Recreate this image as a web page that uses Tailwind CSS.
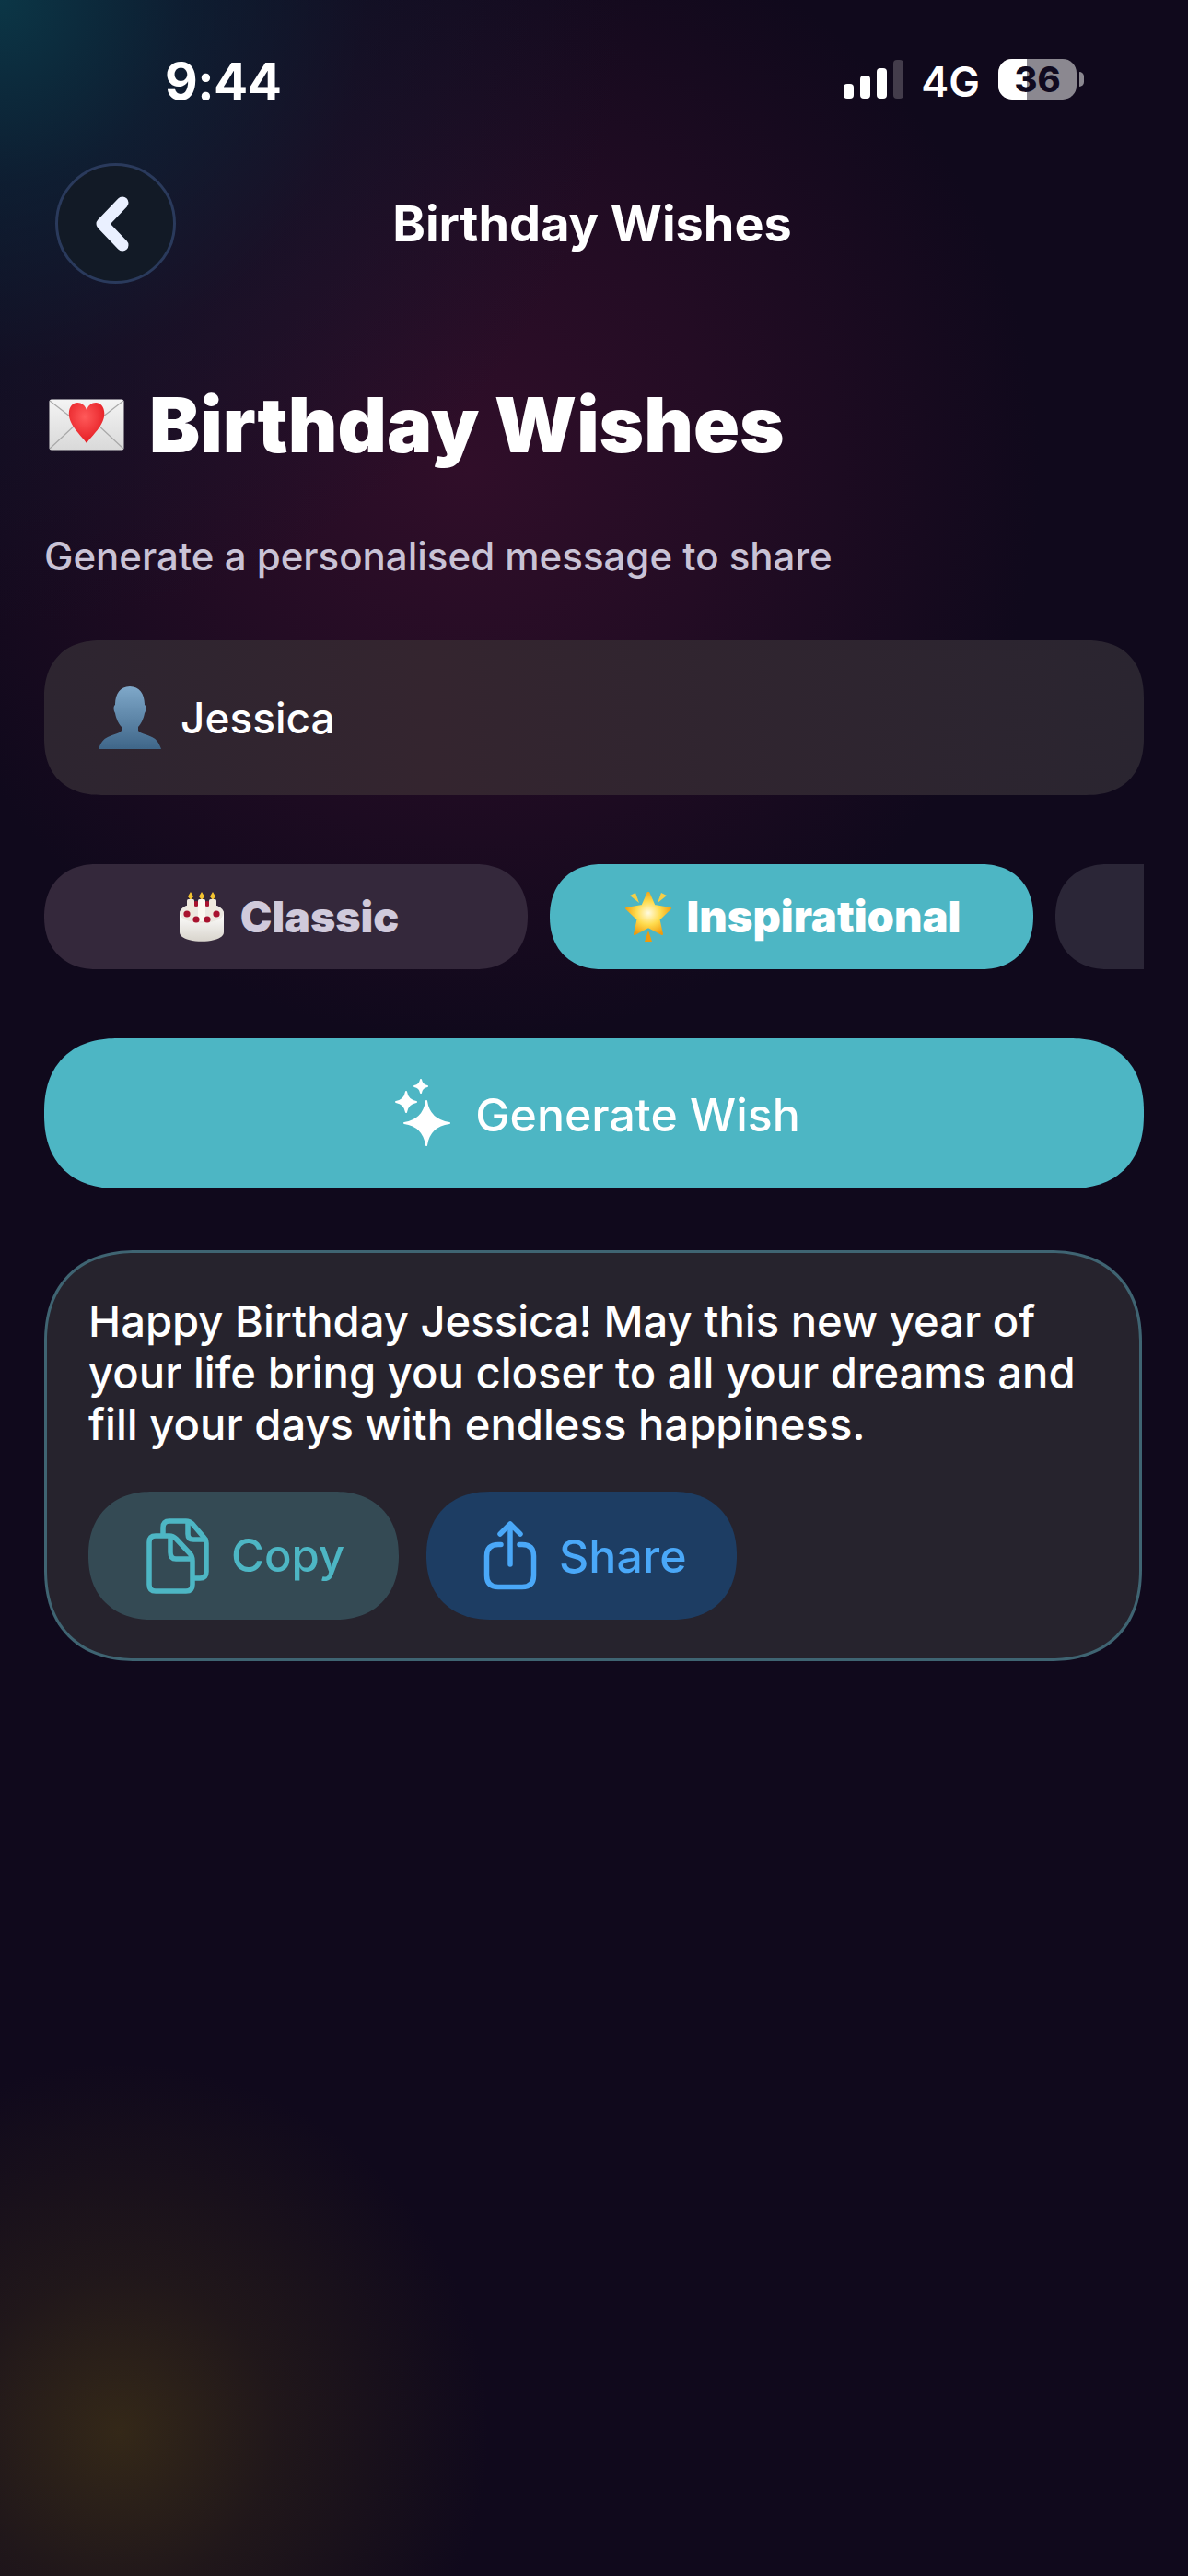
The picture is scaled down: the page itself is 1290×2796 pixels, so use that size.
<!DOCTYPE html>
<html lang="en">
<head>
    <meta charset="UTF-8">
    <meta name="viewport" content="width=device-width, initial-scale=1.0">
    <title>Birthday Wishes</title>
    <script src="https://cdn.jsdelivr.net/npm/@tailwindcss/browser@4"></script>
</head>
<body class="w-[1290px] h-[2796px] overflow-hidden text-white font-['Inter',sans-serif] bg-[#10091c] bg-[radial-gradient(circle_at_0px_0px,rgba(11,54,70,1)_0px,rgba(12,40,60,0.65)_200px,rgba(14,27,48,0.35)_400px,rgba(15,20,40,0)_680px),radial-gradient(circle_at_510px_510px,#300e29_0px,rgba(48,14,41,0.6)_280px,rgba(48,14,41,0)_620px),radial-gradient(circle_at_130px_2640px,rgba(52,40,24,1)_0px,rgba(52,40,24,0.45)_170px,rgba(52,40,24,0)_400px)]">

    <!-- Status bar -->
    <div class="h-[177px] flex justify-between items-start pt-[58px] pl-[179px] pr-[113px]">
        <span class="text-[55px] leading-[60px] font-bold tracking-[-0.5px]">9:44</span>
        <div class="flex items-center h-[44px] mt-[6px]">
            <svg class="w-[65px] h-[42px]" viewBox="0 0 65 42" fill="#fff">
                <rect x="0" y="26" width="11" height="16" rx="4"/>
                <rect x="18" y="17" width="11" height="25" rx="4"/>
                <rect x="36" y="9" width="11" height="33" rx="4"/>
                <rect x="54" y="0" width="11" height="42" rx="4" fill="#433c4b"/>
            </svg>
            <span class="ml-[19px] pt-[5px] text-[45px] leading-[44px] font-semibold">4G</span>
            <!-- Battery -->
            <div class="relative ml-[20px] w-[85px] h-[44px] rounded-[15px] overflow-hidden bg-[#8b8890] flex items-center justify-center">
                <div class="absolute left-0 top-0 bottom-0 w-[31px] bg-white"></div>
                <span class="relative text-[38px] leading-[44px] font-extrabold text-[#100a1f]">36</span>
            </div>
            <div class="ml-[3px] w-[5px] h-[16px] rounded-r-full bg-[#8b8890]"></div>
        </div>
    </div>

    <!-- Nav -->
    <div class="relative h-[131px] flex items-center justify-center mr-[4px]">
        <button class="absolute left-[60px] top-0 w-[131px] h-[131px] rounded-full bg-[#121a26] border-[3px] border-[#2a3a5c] flex items-center justify-center">
            <svg class="w-[48px] h-[72px]" viewBox="0 0 48 72" fill="none" stroke="#eaf0ff" stroke-width="13" stroke-linecap="round" stroke-linejoin="round">
                <path d="M31 13 L9 36 L31 59"/>
            </svg>
        </button>
        <h2 class="text-[54px] leading-[60px] font-bold">Birthday Wishes</h2>
    </div>

    <div class="px-[48px]">
        <!-- Heading -->
        <div class="flex items-center mt-[105px] h-[96px]">
            <svg class="ml-[5px] w-[82px] h-[56px]" viewBox="0 0 82 56">
                <defs>
                    <linearGradient id="env" x1="0" y1="0" x2="0" y2="1">
                        <stop offset="0" stop-color="#f4f4f4"/>
                        <stop offset="1" stop-color="#d9d9d9"/>
                    </linearGradient>
                    <radialGradient id="heart" cx="0.45" cy="0.35" r="0.7">
                        <stop offset="0" stop-color="#ff5a5a"/>
                        <stop offset="1" stop-color="#e3181f"/>
                    </radialGradient>
                </defs>
                <rect x="0.5" y="0.5" width="81" height="55" rx="2.5" fill="url(#env)"/>
                <path d="M1 2 L41 33 L81 2 M1 54 L30 27 M81 54 L52 27" fill="none" stroke="#a9a9a9" stroke-width="1.2"/>
                <path d="M41 47 C34 39 16 28 16 15 C16 7 22 3 28 3 C34 3 39 6 41 11 C43 6 48 3 54 3 C60 3 66 7 66 15 C66 28 48 39 41 47 Z" fill="url(#heart)" transform="translate(9.5 1) scale(0.77 1)"/>
            </svg>
            <h1 class="ml-[27px] text-[82.7px] leading-[96px] font-black">Birthday Wishes</h1>
        </div>

        <p class="mt-[70px] text-[42px] leading-[50px] font-medium text-[#c9c3d6]">Generate a personalised message to share</p>

        <!-- Name input -->
        <div class="mt-[66px] h-[168px] rounded-[62px] [corner-shape:superellipse(1.2)] bg-[linear-gradient(90deg,#2d2530,#34252f_35%,#2a2530)] flex items-center pl-[59px]">
            <svg class="w-[68px] h-[68px]" viewBox="0 0 68 68">
                <defs>
                    <linearGradient id="person" x1="0" y1="0" x2="0" y2="1">
                        <stop offset="0" stop-color="#7fa8c9"/>
                        <stop offset="1" stop-color="#3f6689"/>
                    </linearGradient>
                </defs>
                <path d="M34 0 C45 0 50 9 50 20 C52 21 52 26 50 29 C49 35 46 41 43 44 L43 48 C45 51 52 52 58 55 C63 57 66 62 68 68 L0 68 C2 62 5 57 10 55 C16 52 23 51 25 48 L25 44 C22 41 19 35 18 29 C16 26 16 21 18 20 C18 9 23 0 34 0 Z" fill="url(#person)"/>
            </svg>
            <span class="ml-[21px] text-[46px] leading-[56px] font-medium">Jessica</span>
        </div>

        <!-- Tone pills -->
        <div class="mt-[75px] flex gap-[24px] overflow-hidden h-[114px]">
            <div class="shrink-0 w-[525px] h-[114px] rounded-[57px] [corner-shape:superellipse(1.15)] bg-[#34283b] flex items-center justify-center pl-[6px]">
                <svg class="w-[50px] h-[54px]" viewBox="0 0 50 54">
                    <defs>
                        <linearGradient id="cake" x1="0" y1="0" x2="0" y2="1">
                            <stop offset="0" stop-color="#ffffff"/>
                            <stop offset="1" stop-color="#d8d4cc"/>
                        </linearGradient>
                    </defs>
                    <path d="M13 0 L16 5 L13 9 L10 5 Z M25 0 L28 5 L25 9 L22 5 Z M37 0 L40 5 L37 9 L34 5 Z" fill="#f4c430"/>
                    <ellipse cx="25" cy="24" rx="24" ry="12" fill="#f2efe9"/>
                    <path d="M1 24 C1 22 49 22 49 24 V44 C49 57 1 57 1 44 Z" fill="url(#cake)"/>
                    <ellipse cx="25" cy="23" rx="24" ry="11" fill="#ece8e1"/>
                    <circle cx="19" cy="13" r="3" fill="#a8122e"/><circle cx="31" cy="13" r="3" fill="#a8122e"/>
                    <rect x="9" y="8" width="8" height="20" rx="1.5" fill="#efe9dd"/>
                    <rect x="21" y="8" width="8" height="24" rx="1.5" fill="#fbf8f0"/>
                    <rect x="33" y="8" width="8" height="20" rx="1.5" fill="#efe9dd"/>
                    <circle cx="9" cy="24" r="3.6" fill="#a8122e"/><circle cx="19" cy="30" r="3.6" fill="#a8122e"/>
                    <circle cx="31" cy="30" r="3.6" fill="#a8122e"/><circle cx="41" cy="24" r="3.6" fill="#a8122e"/>
                </svg>
                <span class="ml-[17px] text-[46.4px] leading-[56px] font-black text-[#d0cadb]">Classic</span>
            </div>
            <div class="shrink-0 w-[525px] h-[114px] rounded-[57px] [corner-shape:superellipse(1.15)] bg-[#4db6c4] flex items-center justify-center">
                <svg class="w-[52px] h-[54px] translate-x-[2px]" viewBox="0 0 52 54">
                    <defs>
                        <radialGradient id="star" cx="0.5" cy="0.5" r="0.55">
                            <stop offset="0" stop-color="#fffbe0"/>
                            <stop offset="0.5" stop-color="#ffdc4e"/>
                            <stop offset="1" stop-color="#f09a0c"/>
                        </radialGradient>
                    </defs>
                    <path d="M26 0 L32.5 15 L50 18 L37.5 30 L41 46 L26 38 L11 46 L14.5 30 L2 18 L19.5 15 Z" fill="url(#star)" stroke="url(#star)" stroke-width="2" stroke-linejoin="round"/>
                    <path d="M6 4 L12 1 L16 12 Z M46 4 L40 1 L36 12 Z" fill="#f7cf45"/>
                    <path d="M26 42 L30 54 L22 54 Z" fill="#f09a0c"/>
                </svg>
                <span class="ml-[18px] text-[47px] leading-[56px] font-black">Inspirational</span>
            </div>
            <div class="shrink-0 w-[525px] h-[114px] rounded-[57px] [corner-shape:superellipse(1.15)] bg-[#2b2637]"></div>
        </div>

        <!-- Generate button -->
        <button class="mt-[75px] w-full h-[163px] rounded-[80px] [corner-shape:superellipse(1.2)] bg-[#4db6c4] flex items-center justify-center pl-[6px]">
            <svg class="w-[64px] h-[77px]" viewBox="0 0 64 77" fill="#fff" stroke="#fff" stroke-width="2" stroke-linejoin="round">
                <path d="M36 25 Q39 46 61 49 Q39 52 36 73 Q33 52 12 49 Q33 46 36 25 Z"/>
                <path d="M14 15 Q15.5 24.5 25 26 Q15.5 27.5 14 37 Q12.5 27.5 3 26 Q12.5 24.5 14 15 Z"/>
                <path d="M30 2 Q31 8 37 9 Q31 10 30 16 Q29 10 23 9 Q29 8 30 2 Z"/>
            </svg>
            <span class="ml-[25px] pt-[2px] text-[50px] leading-[60px] font-medium">Generate Wish</span>
        </button>

        <!-- Result card -->
        <div class="mt-[67px] w-[1192px] h-[446px] rounded-[100px] [corner-shape:superellipse(1.2)] border-[3px] border-[#3f6472] bg-[#26232d] pl-[45px] pt-[46px]">
            <p class="text-[47.2px] leading-[56px] font-medium">Happy Birthday Jessica! May this new year of<br>your life bring you closer to all your dreams and<br>fill your days with endless happiness.</p>
            <div class="mt-[45px] flex gap-[30px]">
                <button class="w-[337px] h-[139px] rounded-[69px] [corner-shape:superellipse(1.15)] bg-[#344a54] flex items-center pl-[63px] text-[#4db6c4]">
                    <svg class="w-[68px] h-[82px]" viewBox="0 0 68 82" fill="none" stroke="currentColor" stroke-width="5.5" stroke-linejoin="round" stroke-linecap="round">
                        <path d="M18 17 V10 Q18 3 25 3 H43 Q47 3 50 6 L61 19 Q65 23 65 27 V58 Q65 65 58 65 H52"/>
                        <path d="M45 4 V17 Q45 23 51 23 H64"/>
                        <path d="M3 26 Q3 19 10 19 H25 Q29 19 32 22 L47 38 Q50 41 50 46 V72 Q50 79 43 79 H10 Q3 79 3 72 Z"/>
                        <path d="M26 20 V37 Q26 44 32 44 H49"/>
                    </svg>
                    <span class="ml-[24px] text-[49px] leading-[60px] font-medium">Copy</span>
                </button>
                <button class="w-[337px] h-[139px] rounded-[69px] [corner-shape:superellipse(1.15)] bg-[#1d3d63] flex items-center pl-[62px] text-[#4aa8f8]">
                    <svg class="w-[58px] h-[76px]" viewBox="0 0 58 76" fill="none" stroke="currentColor" stroke-width="5.5" stroke-linejoin="round" stroke-linecap="round">
                        <path d="M19 25.5 H16 Q3.5 25.5 3.5 38 V59 Q3.5 71.5 16 71.5 H42 Q54.5 71.5 54.5 59 V38 Q54.5 25.5 42 25.5 H39"/>
                        <path d="M29 47 V3 M18 14 L29 3 L40 14"/>
                    </svg>
                    <span class="ml-[24px] text-[50px] leading-[60px] font-medium">Share</span>
                </button>
            </div>
        </div>
    </div>
</body>
</html>
